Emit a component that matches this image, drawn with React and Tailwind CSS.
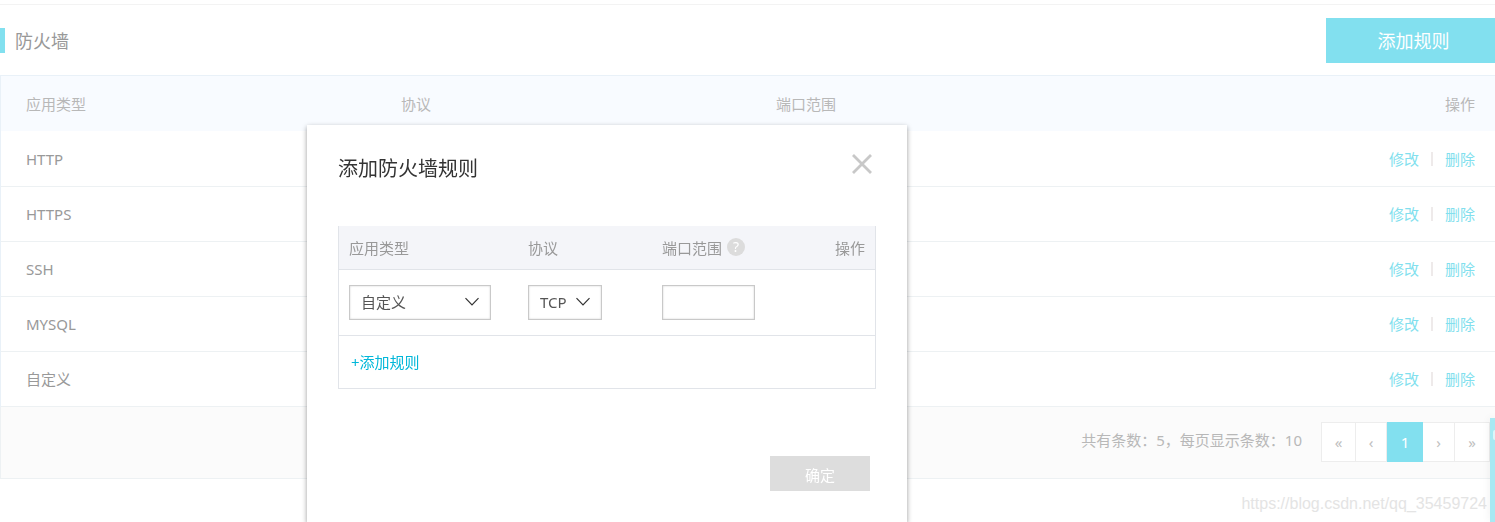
const rules = ["HTTP", "HTTPS", "SSH", "MYSQL", "自定义"];

function Chevron() {
  return (
    <svg
      className="pointer-events-none absolute top-3 right-3 h-[10px] w-[14px]"
      viewBox="0 0 14 10"
      fill="none"
      stroke="#333333"
      strokeWidth="1.2"
      aria-hidden="true"
    >
      <path d="M0.5 1.2 L7 8 L13.5 1.2" />
    </svg>
  );
}

function Select({ label, options, className }) {
  return (
    <div className={`relative ${className}`}>
      <select
        aria-label={label}
        className="block h-[35px] w-full appearance-none rounded-none border border-[#c9c9c9] bg-white pb-[2px] pl-[11px] text-[15px] text-[#555555] shadow-[inset_0_0_2px_rgba(0,0,0,0.2)]"
      >
        {options.map((o) => (
          <option key={o}>{o}</option>
        ))}
      </select>
      <Chevron />
    </div>
  );
}

function RuleTable() {
  return (
    <table className="w-full table-fixed border-separate border-spacing-0 border-t border-l border-[#e9f1f8] text-left">
      <thead>
        <tr className="h-[55px] bg-[#f8fbff] text-[#b8b8b8]">
          <th className="w-[25.1%] pl-[25px] font-normal">应用类型</th>
          <th className="w-[25.1%] pl-[25px] font-normal">协议</th>
          <th className="w-[25.1%] pl-[25px] font-normal">端口范围</th>
          <th className="pr-5 text-right font-normal">操作</th>
        </tr>
      </thead>
      <tbody>
        {rules.map((name) => (
          <tr key={name} className="h-[55px] first:h-14">
            <td className="border-b border-[#edf1f3] pl-[25px] text-[#999999]">{name}</td>
            <td className="border-b border-[#edf1f3]" />
            <td className="border-b border-[#edf1f3]" />
            <td className="border-b border-[#edf1f3] pr-5">
              <div className="flex items-center justify-end gap-3 text-[#82dfee]">
                <a href="#edit">修改</a>
                <span className="h-[14px] w-[2px] bg-[#eeeaea]" />
                <a href="#delete">删除</a>
              </div>
            </td>
          </tr>
        ))}
      </tbody>
    </table>
  );
}

function Pagination() {
  const cell = "h-10 border-y border-r border-[#ededed] bg-white text-[#c0c0c0]";
  return (
    <div className="flex h-[72px] items-start justify-end border-b border-l border-[#edf1f3] bg-[#fbfbfb] pt-[15px] pr-[5px]">
      <p className="mr-[19px] leading-9 text-[#b8b8b8]">共有条数：5，每页显示条数：10</p>
      <nav className="flex" aria-label="分页">
        <button className={`w-[35px] border-l ${cell}`}>«</button>
        <button className={`w-[31px] ${cell}`}>‹</button>
        <button className="h-10 w-9 bg-[#82e0ef] text-white">1</button>
        <button className={`w-8 ${cell}`}>›</button>
        <button className={`w-[35px] ${cell}`}>»</button>
      </nav>
    </div>
  );
}

function AddRuleDialog() {
  return (
    <section
      role="dialog"
      aria-labelledby="dialog-title"
      className="fixed top-[125px] bottom-0 left-[307px] w-[600px] bg-white px-[31px] pt-[29px] shadow-[0_2px_5px_rgba(0,0,0,0.4)]"
    >
      <header className="flex items-start justify-between pr-1">
        <h2 id="dialog-title" className="text-xl leading-[30px] text-[#333333]">
          添加防火墙规则
        </h2>
        <button aria-label="关闭">
          <svg className="size-5" viewBox="0 0 20 20" fill="none" stroke="#c8c8c8" strokeWidth="2.8">
            <path d="M1 1 L19 19 M19 1 L1 19" />
          </svg>
        </button>
      </header>

      <div className="mt-[42px] border-x border-b border-[#e1e4e9]">
        <table className="w-full table-fixed border-separate border-spacing-0 text-left">
          <thead>
            <tr className="h-11 bg-[#f4f5f9] text-[#999999]">
              <th className="w-[179px] border-b border-[#e1e4e9] pl-[10px] font-normal">应用类型</th>
              <th className="w-[134px] border-b border-[#e1e4e9] pl-[10px] font-normal">协议</th>
              <th className="border-b border-[#e1e4e9] pl-[10px] font-normal">
                <span className="flex items-start gap-[5px]">
                  端口范围
                  <span className="mt-[2px] flex size-[18px] items-center justify-center rounded-full bg-[#dcdcdc] text-sm leading-none text-white">
                    ?
                  </span>
                </span>
              </th>
              <th className="w-20 border-b border-[#e1e4e9] pr-[10px] text-right font-normal">操作</th>
            </tr>
          </thead>
          <tbody>
            <tr className="h-[66px]">
              <td className="border-b border-[#e1e4e9] pl-[10px]">
                <Select label="应用类型" options={["自定义"]} className="w-[142px]" />
              </td>
              <td className="border-b border-[#e1e4e9] pl-[10px]">
                <Select label="协议" options={["TCP"]} className="w-[74px]" />
              </td>
              <td className="border-b border-[#e1e4e9] pl-[10px]">
                <input
                  type="text"
                  aria-label="端口范围"
                  className="block h-[35px] w-[93px] border border-[#c9c9c9] bg-white px-2 shadow-[inset_0_0_2px_rgba(0,0,0,0.2)]"
                />
              </td>
              <td className="border-b border-[#e1e4e9]" />
            </tr>
          </tbody>
        </table>
        <button className="flex h-[52px] items-center pl-3 text-[#00b7d9]">+添加规则</button>
      </div>

      <div className="mt-[67px] flex justify-end pr-[6px]">
        <button className="h-[35px] w-[100px] bg-[#dddddd] pt-[2px] text-white">确定</button>
      </div>
    </section>
  );
}

export default function App() {
  return (
    <main className="bg-white pt-1 font-['Noto_Sans','Noto_Sans_CJK_SC',sans-serif] text-[15px] leading-6">
      <header className="flex items-center justify-between border-t border-[#f3f3f3] pt-[13px] pb-3">
        <h1 className="flex items-center gap-[10px] text-lg text-[#999999]">
          <span className="h-[25px] w-[5px] bg-[#82e0ef]" />
          防火墙
        </h1>
        <button className="h-[45px] w-[169px] bg-[#82e0ef] pl-[6px] text-lg text-white">添加规则</button>
      </header>
      <RuleTable />
      <Pagination />
      <p className="mt-[13px] pr-2 text-right font-['Liberation_Sans',sans-serif] text-base text-[#e4e4e4]">
        https://blog.csdn.net/qq_35459724
      </p>
      <AddRuleDialog />
      <aside className="fixed top-[418px] right-0 bottom-0 w-[5px] bg-[#a8e9f3] pt-3 pl-[3px] shadow-[0_0_8px_rgba(0,0,0,0.08)]">
        <div className="h-[10px] rounded-l-sm bg-[#dcf6fa]" />
      </aside>
    </main>
  );
}
